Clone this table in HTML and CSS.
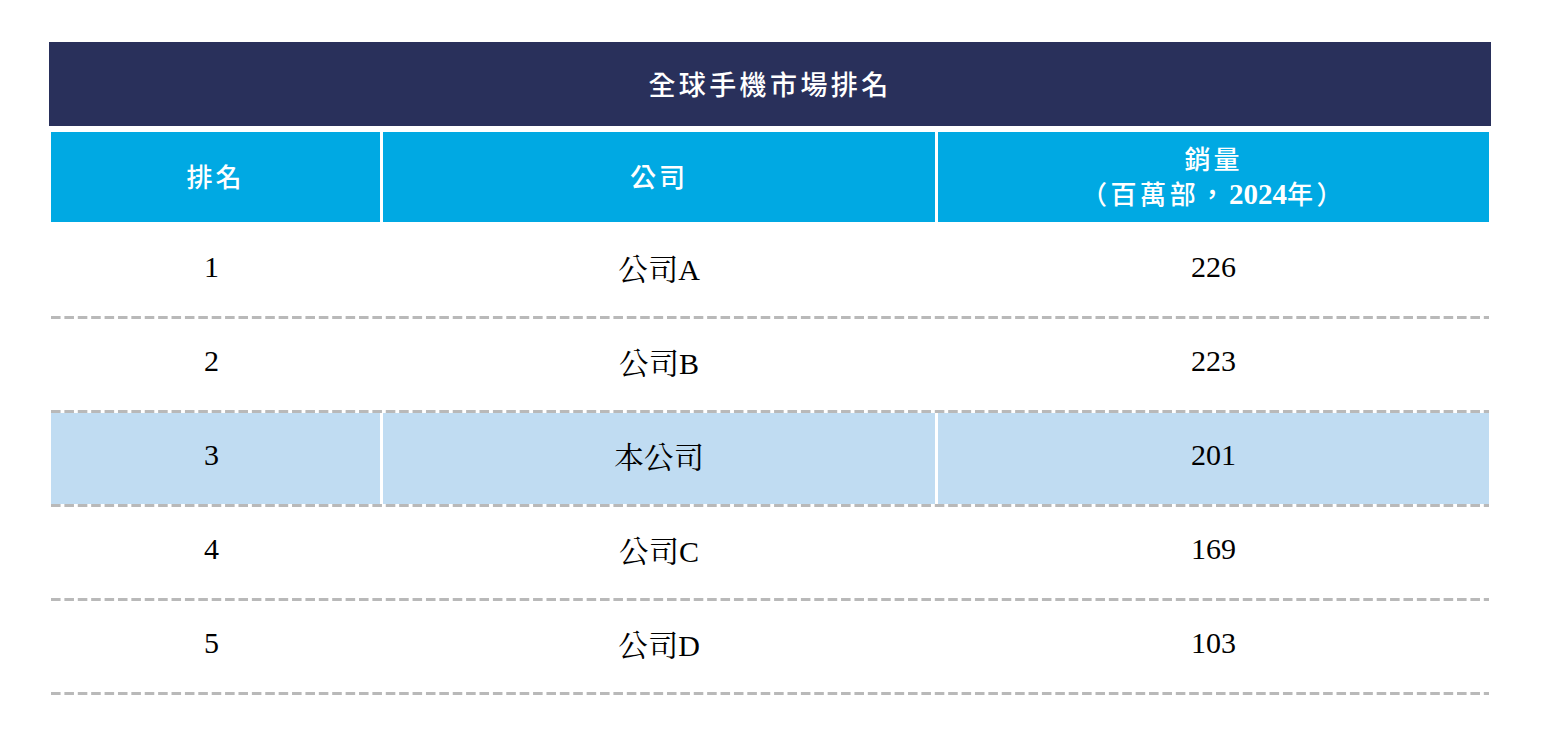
FILE: index.html
```html
<!DOCTYPE html>
<html lang="zh-Hant">
<head>
<meta charset="utf-8">
<title>全球手機市場排名</title>
<link rel="stylesheet" href="styles.css">
</head>
<body>
<div class="table">
  <div class="title">全球手機市場排名</div>
  <div class="head">
    <div class="hcell">排名</div>
    <div class="hcell">公司</div>
    <div class="hcell two"><span>銷量</span><span class="unit">（百萬部，<b class="num">2024</b>年）</span></div>
  </div>
  <div class="rows">
    <div class="row"><div class="cell rank">1</div><div class="cell">公司A</div><div class="cell">226</div></div>
    <div class="row"><div class="cell rank">2</div><div class="cell">公司B</div><div class="cell">223</div></div>
    <div class="row hl"><div class="cell rank">3</div><div class="cell">本公司</div><div class="cell">201</div></div>
    <div class="row"><div class="cell rank">4</div><div class="cell">公司C</div><div class="cell">169</div></div>
    <div class="row"><div class="cell rank">5</div><div class="cell">公司D</div><div class="cell">103</div></div>
  </div>
</div>
</body>
</html>
```

FILE: styles.css
```css
html, body {
  margin: 0;
  padding: 0;
  background: #ffffff;
}

body {
  font-family: "Noto Sans CJK TC", "Noto Sans", sans-serif;
}

.table {
  width: 1442px;
  margin: 42px 0 0 49px;
  display: flex;
  flex-direction: column;
}

.title {
  height: 84px;
  background: #29305b;
  color: #ffffff;
  font-size: 27px;
  font-weight: 500;
  letter-spacing: 3.4px;
  display: flex;
  align-items: center;
  justify-content: center;
  padding-bottom: 2px;
  box-sizing: border-box;
}

.head {
  margin-top: 6px;
  padding: 0 2px;
  display: grid;
  grid-template-columns: 329px 552px 551px;
  column-gap: 3px;
  height: 90px;
}

.hcell {
  background: #00a9e3;
  color: #ffffff;
  font-size: 26px;
  font-weight: 500;
  letter-spacing: 3px;
  display: flex;
  flex-direction: column;
  align-items: center;
  justify-content: center;
  line-height: 35px;
  padding-bottom: 3px;
  box-sizing: border-box;
}

.hcell .unit {
  letter-spacing: 3.6px;
}

.hcell .num {
  font-family: "Liberation Serif", serif;
  font-weight: 700;
  font-size: 29px;
  letter-spacing: 0;
}

.rows {
  margin-top: 3px;
  display: flex;
  flex-direction: column;
  padding: 0 2px;
}

.row {
  height: 94px;
  display: grid;
  grid-template-columns: 329px 552px 551px;
  column-gap: 3px;
  position: relative;
  padding-bottom: 3px;
  box-sizing: border-box;
}

.row::after {
  content: "";
  position: absolute;
  left: 0;
  right: 0;
  bottom: 0;
  height: 3px;
  background-image: linear-gradient(to right, #b9b9b9 10px, transparent 10px);
  background-size: 13.4px 3px;
  background-repeat: repeat-x;
}

.cell {
  display: flex;
  align-items: center;
  justify-content: center;
  font-family: "Liberation Serif", "Noto Serif CJK TC", "Noto Sans CJK TC", serif;
  font-size: 30px;
  color: #000000;
  padding-bottom: 8px;
}

.cell.rank {
  padding-right: 8px;
}

.row.hl .cell {
  background: #c0dcf2;
}
```
